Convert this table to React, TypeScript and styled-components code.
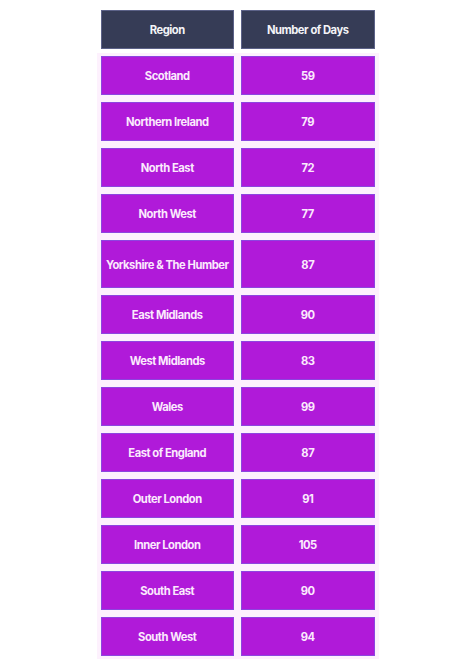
import React from 'react';
import styled, { createGlobalStyle } from 'styled-components';

const GlobalStyle = createGlobalStyle`
  html, body {
    margin: 0;
    padding: 0;
    background: #ffffff;
  }
`;

const rows: [string, number][] = [
  ['Scotland', 59],
  ['Northern Ireland', 79],
  ['North East', 72],
  ['North West', 77],
  ['Yorkshire & The Humber', 87],
  ['East Midlands', 90],
  ['West Midlands', 83],
  ['Wales', 99],
  ['East of England', 87],
  ['Outer London', 91],
  ['Inner London', 105],
  ['South East', 90],
  ['South West', 94],
];

const Page = styled.div`
  display: flex;
  justify-content: center;
  padding-top: 10px;
  font-family: Inter, 'Noto Sans', sans-serif;
`;

const Table = styled.div`
  width: 274px;
  display: flex;
  flex-direction: column;
  gap: 7px;
`;

const Row = styled.div<{ $tall?: boolean }>`
  display: grid;
  grid-template-columns: minmax(0, 1fr) minmax(0, 1fr);
  column-gap: 7px;
  height: ${(p) => (p.$tall ? 48 : 39)}px;
`;

const Body = styled.div`
  display: flex;
  flex-direction: column;
  gap: 7px;
  margin: 0 -4px;
  padding: 0 4px 3px;
  background: #fdf1fd;
  box-shadow: 0 -3px 0 #fdf1fd;
`;

const Cell = styled.div<{ $head?: boolean }>`
  display: flex;
  align-items: center;
  justify-content: center;
  padding-top: 1px;
  background: ${(p) => (p.$head ? '#363c56' : '#b01ad9')};
  border: 1px solid ${(p) => (p.$head ? '#5c6288' : '#8d45e0')};
  color: ${(p) => (p.$head ? '#f4f4f8' : '#fbeafd')};
  font-size: 11.2px;
  font-weight: 700;
  letter-spacing: -0.45px;
  white-space: nowrap;
`;

export default function App() {
  return (
    <>
      <GlobalStyle />
      <Page>
        <Table>
          <Row>
            <Cell $head>Region</Cell>
            <Cell $head>Number of Days</Cell>
          </Row>
          <Body>
            {rows.map(([region, days]) => (
              <Row key={region} $tall={region.startsWith('Yorkshire')}>
                <Cell>{region}</Cell>
                <Cell>{days}</Cell>
              </Row>
            ))}
          </Body>
        </Table>
      </Page>
    </>
  );
}
